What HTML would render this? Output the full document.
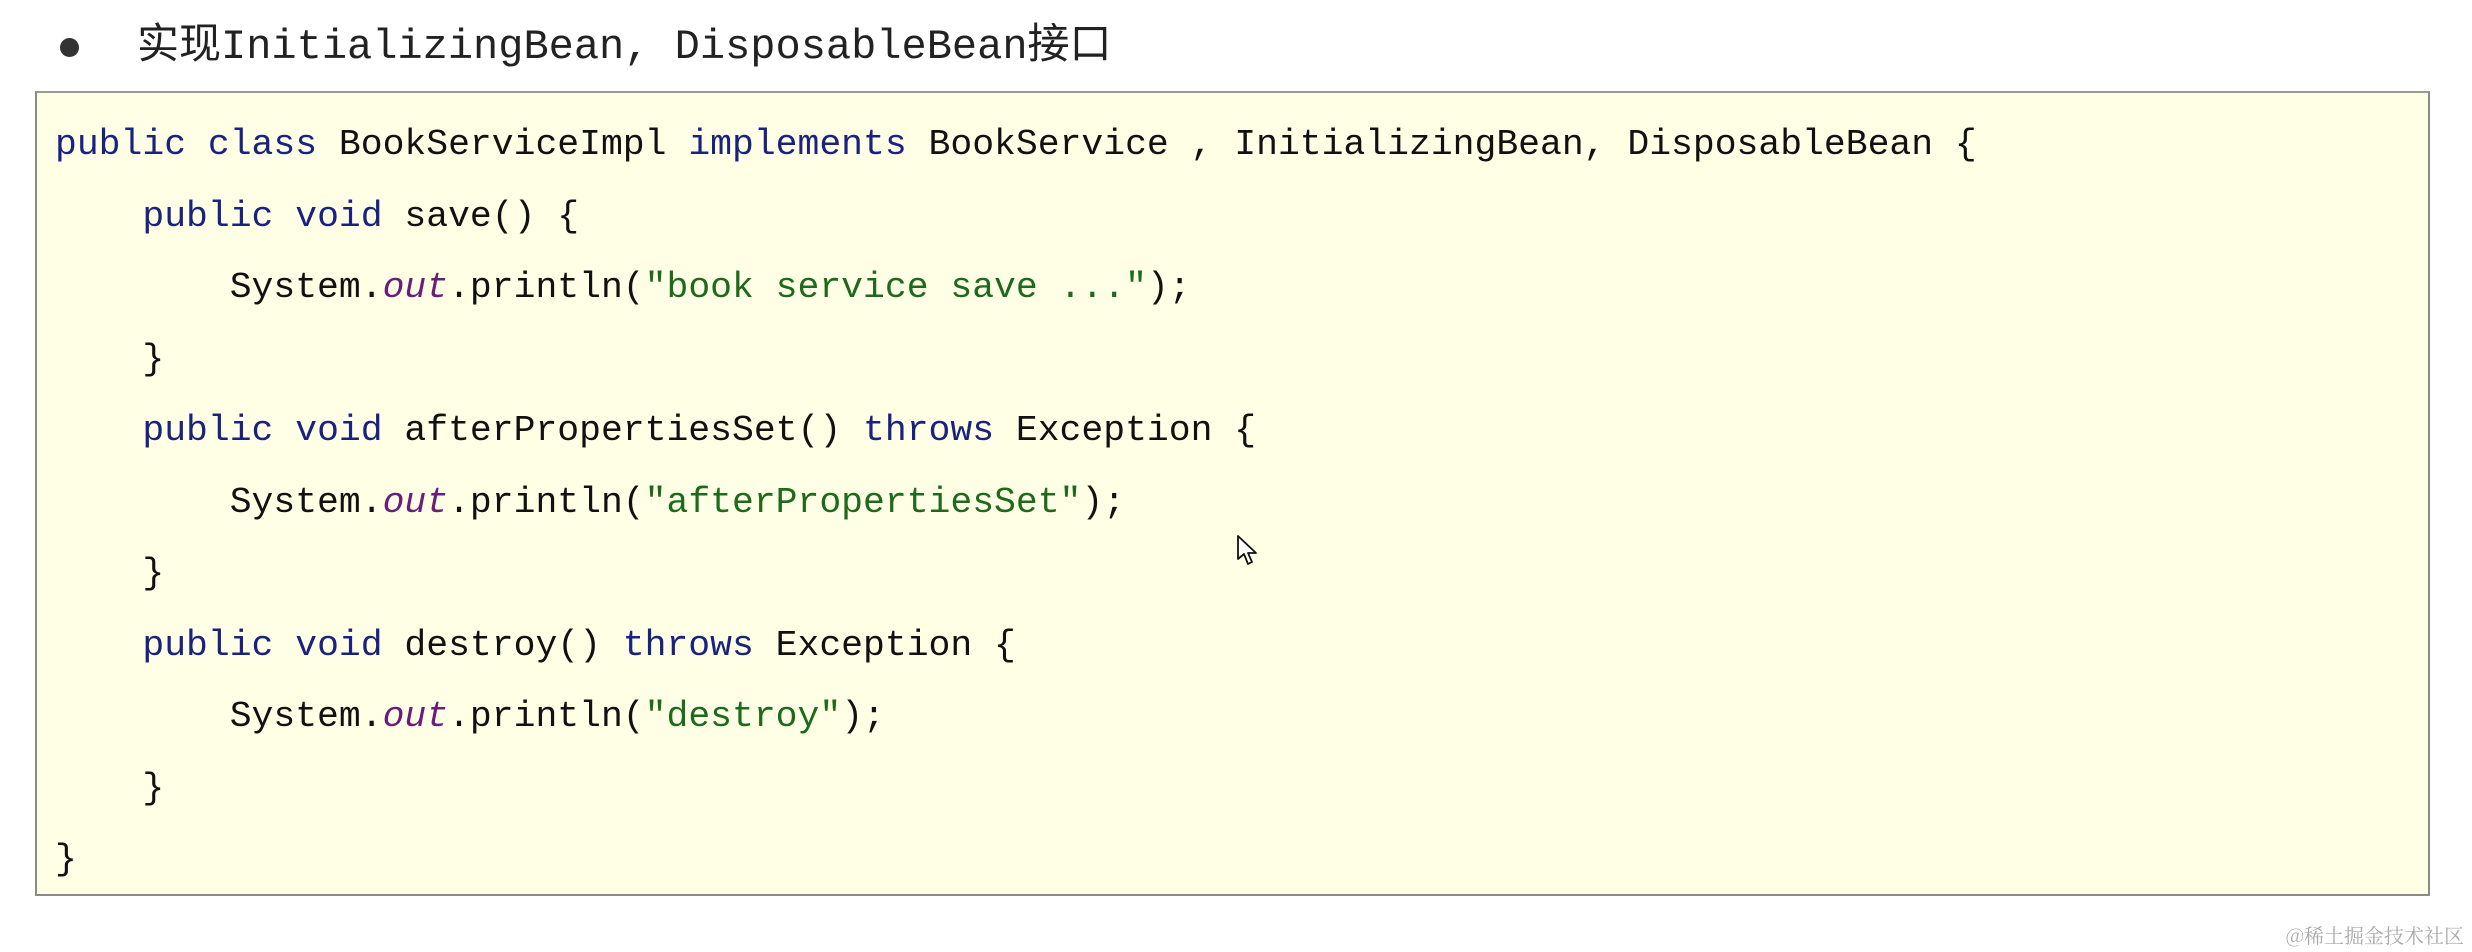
<!DOCTYPE html>
<html><head><meta charset="utf-8"><style>
html,body{margin:0;padding:0;background:#fff;}
body{width:2472px;height:952px;position:relative;overflow:hidden;}
.title{position:absolute;left:137px;top:20px;font:42px/54px "Liberation Mono","Noto Sans CJK SC",monospace;color:#222;white-space:pre;}
.bullet{position:absolute;left:60px;top:38px;width:19px;height:19px;border-radius:50%;background:#333;}
.box{position:absolute;left:35px;top:91px;width:2391px;height:801px;background:#ffffe6;border:2px solid #8a8a8a;border-top-color:#999;}
.code{position:absolute;left:55px;top:109px;font:36.4px/71.5px "Liberation Mono",monospace;color:#111;white-space:pre;margin:0;}
.k{color:#1a2280;}
.s{color:#1d6a1d;}
.o{color:#6a1d7a;font-style:italic;}
.wm{position:absolute;right:8px;top:920px;font:20px "Noto Serif CJK SC","Noto Sans CJK SC",serif;color:#aaa;}
</style></head><body>
<div class="bullet"></div>
<div class="title">实现InitializingBean, DisposableBean接口</div>
<div class="box"></div>
<pre class="code"><span class="k">public class</span> BookServiceImpl <span class="k">implements</span> BookService , InitializingBean, DisposableBean {
    <span class="k">public void</span> save() {
        System.<span class="o">out</span>.println(<span class="s">"book service save ..."</span>);
    }
    <span class="k">public void</span> afterPropertiesSet() <span class="k">throws</span> Exception {
        System.<span class="o">out</span>.println(<span class="s">"afterPropertiesSet"</span>);
    }
    <span class="k">public void</span> destroy() <span class="k">throws</span> Exception {
        System.<span class="o">out</span>.println(<span class="s">"destroy"</span>);
    }
}</pre>
<svg style="position:absolute;left:1236px;top:534px" width="24" height="34" viewBox="0 0 24 34"><path d="M2 2 L2 25 L8 20 L12 30 L16 28 L12 19 L20 19 Z" fill="#fff" stroke="#111" stroke-width="1.8" stroke-linejoin="round"/></svg>
<div class="wm">@稀土掘金技术社区</div>
</body></html>
